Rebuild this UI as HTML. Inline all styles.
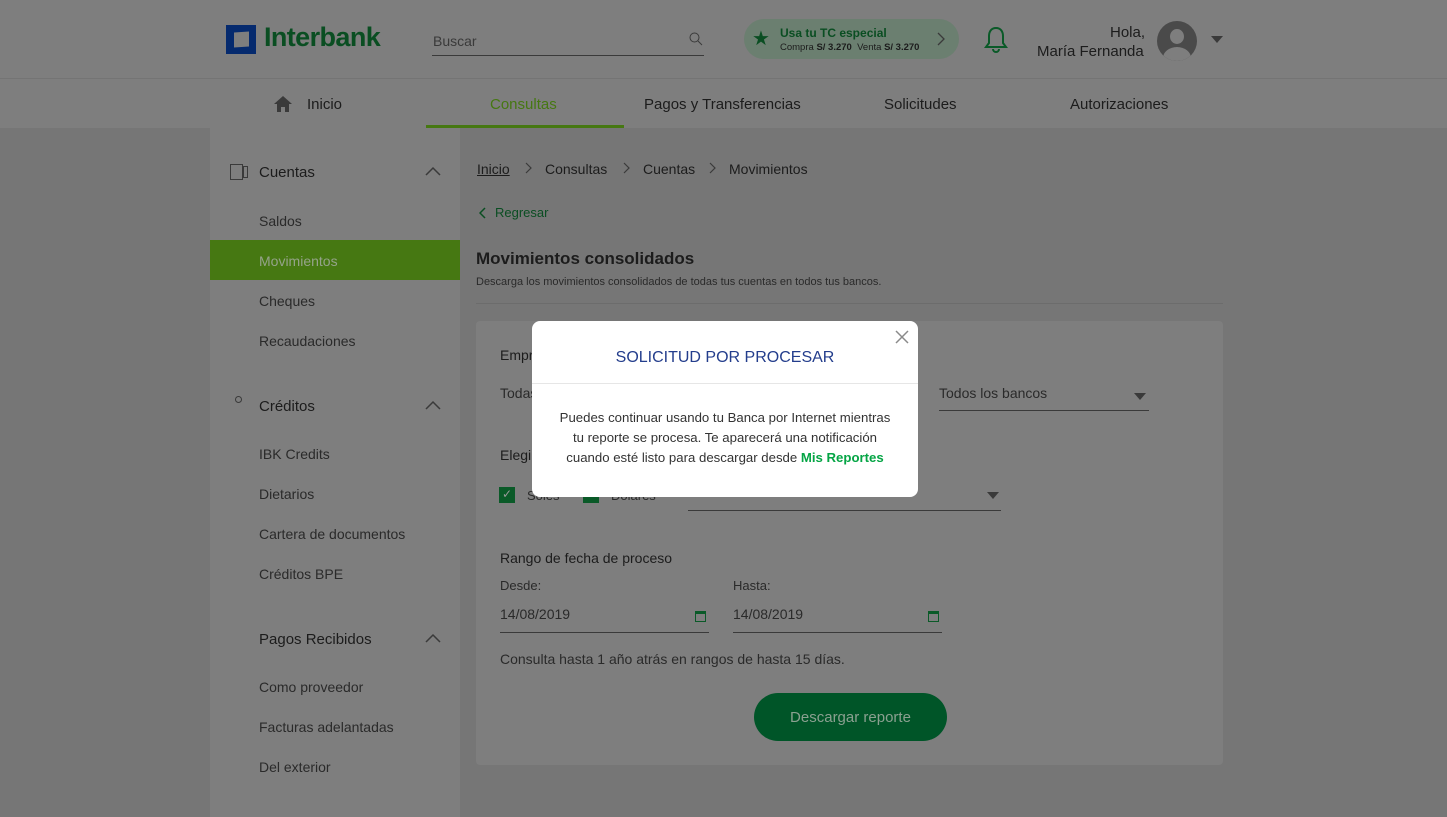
<!DOCTYPE html>
<html><head><meta charset="utf-8"><style>
*{margin:0;padding:0;box-sizing:border-box}
body{width:1447px;height:817px;overflow:hidden;background:#767676;font-family:"Liberation Sans",sans-serif;color:#1c1c1c;position:relative}
.a{position:absolute;white-space:nowrap}
</style></head><body>
<div class="a" style="left:0;top:0;width:1447px;height:128px;background:#7e7e7e"></div>
<div class="a" style="left:0;top:78px;width:1447px;height:1px;background:#747474"></div>
<!-- logo -->
<div class="a" style="left:226px;top:25px;width:30px;height:29px;background:#052a6e"></div>
<div class="a" style="left:234px;top:32px;width:15px;height:15px;background:#7e7e7e;transform:skewY(-4deg)"></div>
<div class="a" style="left:264px;top:22px;font-size:27px;font-weight:bold;color:#0a4e22;letter-spacing:-0.6px">Interbank</div>
<div class="a" style="left:433px;top:33px;font-size:14px;color:#3a3a3a">Buscar</div>
<div class="a" style="left:432px;top:55px;width:272px;height:1px;background:#3a3a3a"></div>
<svg class="a" style="left:689px;top:32px" width="14" height="14"><circle cx="5.5" cy="5.5" r="4.5" fill="none" stroke="#3a3a3a" stroke-width="1"/><line x1="9" y1="9" x2="13" y2="13" stroke="#3a3a3a"/></svg>
<div class="a" style="left:744px;top:19px;width:215px;height:40px;border-radius:20px;background:#6b7f70"></div>
<div class="a" style="left:752px;top:26px;font-size:20px;color:#0a4e22">★</div>
<div class="a" style="left:780px;top:26px;font-size:12px;font-weight:bold;color:#0a4e22">Usa tu TC especial</div>
<div class="a" style="left:780px;top:42px;font-size:9.5px;color:#1c1c1c">Compra <b>S/ 3.270</b> &nbsp;Venta <b>S/ 3.270</b></div>
<svg class="a" style="left:936px;top:32px" width="10" height="14"><path d="M2 1l6 6-6 6" fill="none" stroke="#3a3a3a" stroke-width="1.3"/></svg>
<svg class="a" style="left:983px;top:25px" width="26" height="30"><path d="M13 3c-5 0-7 4-7 8v7l-3 4h20l-3-4v-7c0-4-2-8-7-8z M10 24a3 3 0 0 0 6 0" fill="none" stroke="#0a5a28" stroke-width="2"/></svg>
<div class="a" style="left:1110px;top:24px;font-size:15px;color:#1c1c1c">Hola,</div>
<div class="a" style="left:1037px;top:43px;font-size:15px;color:#1c1c1c">María Fernanda</div>
<div class="a" style="left:1157px;top:21px;width:40px;height:40px;border-radius:50%;background:#4a4a4a;overflow:hidden"><div style="position:absolute;left:13px;top:8px;width:14px;height:15px;border-radius:50%;background:#7e7e7e"></div><div style="position:absolute;left:6px;top:26px;width:28px;height:22px;border-radius:50%;background:#7e7e7e"></div></div>
<div class="a" style="left:1211px;top:36px;border:6px solid transparent;border-top:7px solid #3a3a3a"></div>
<!-- nav -->
<svg class="a" style="left:273px;top:95px" width="20" height="18"><path d="M10 1L1 9h3v8h4v-5h4v5h4V9h3z" fill="#3a3a3a"/></svg>
<div class="a" style="left:307px;top:96px;font-size:15px">Inicio</div>
<div class="a" style="left:490px;top:96px;font-size:15px;color:#467812">Consultas</div>
<div class="a" style="left:426px;top:125px;width:198px;height:3px;background:#467812"></div>
<div class="a" style="left:644px;top:96px;font-size:15px">Pagos y Transferencias</div>
<div class="a" style="left:884px;top:96px;font-size:15px">Solicitudes</div>
<div class="a" style="left:1070px;top:96px;font-size:15px">Autorizaciones</div>
<!-- sidebar -->
<div class="a" style="left:210px;top:128px;width:250px;height:689px;background:#7e7e7e"></div>
<div class="a" style="left:230px;top:164px;width:13px;height:16px;border:1px solid #3a3a3a"></div>
<div class="a" style="left:243px;top:166px;width:5px;height:12px;border:1px solid #3a3a3a"></div>
<div class="a" style="left:259px;top:164px;font-size:15px">Cuentas</div>
<div class="a" style="left:259px;top:213px;font-size:14px;color:#2a2a2a">Saldos</div>
<div class="a" style="left:210px;top:240px;width:250px;height:40px;background:#467812"></div>
<div class="a" style="left:259px;top:253px;font-size:14px;color:#95a38a">Movimientos</div>
<div class="a" style="left:259px;top:293px;font-size:14px;color:#2a2a2a">Cheques</div>
<div class="a" style="left:259px;top:333px;font-size:14px;color:#2a2a2a">Recaudaciones</div>
<div class="a" style="left:235px;top:396px;width:7px;height:7px;border:1px solid #3a3a3a;border-radius:50%"></div>
<div class="a" style="left:259px;top:398px;font-size:15px">Créditos</div>
<div class="a" style="left:259px;top:446px;font-size:14px;color:#2a2a2a">IBK Credits</div>
<div class="a" style="left:259px;top:486px;font-size:14px;color:#2a2a2a">Dietarios</div>
<div class="a" style="left:259px;top:526px;font-size:14px;color:#2a2a2a">Cartera de documentos</div>
<div class="a" style="left:259px;top:566px;font-size:14px;color:#2a2a2a">Créditos BPE</div>
<div class="a" style="left:259px;top:631px;font-size:15px">Pagos Recibidos</div>
<div class="a" style="left:259px;top:679px;font-size:14px;color:#2a2a2a">Como proveedor</div>
<div class="a" style="left:259px;top:719px;font-size:14px;color:#2a2a2a">Facturas adelantadas</div>
<div class="a" style="left:259px;top:759px;font-size:14px;color:#2a2a2a">Del exterior</div>
<svg class="a" style="left:424px;top:166px" width="18" height="10"><path d="M2 9L9 2l7 7" fill="none" stroke="#3a3a3a" stroke-width="1.5"/></svg>
<svg class="a" style="left:424px;top:400px" width="18" height="10"><path d="M2 9L9 2l7 7" fill="none" stroke="#3a3a3a" stroke-width="1.5"/></svg>
<svg class="a" style="left:424px;top:633px" width="18" height="10"><path d="M2 9L9 2l7 7" fill="none" stroke="#3a3a3a" stroke-width="1.5"/></svg>
<!-- content -->
<div class="a" style="left:477px;top:161px;font-size:14px;text-decoration:underline">Inicio</div>
<svg class="a" style="left:525px;top:162px" width="8" height="12"><path d="M1 1l5 5-5 5" fill="none" stroke="#3a3a3a" stroke-width="1.2"/></svg>
<div class="a" style="left:545px;top:161px;font-size:14px">Consultas</div>
<svg class="a" style="left:623px;top:162px" width="8" height="12"><path d="M1 1l5 5-5 5" fill="none" stroke="#3a3a3a" stroke-width="1.2"/></svg>
<div class="a" style="left:643px;top:161px;font-size:14px">Cuentas</div>
<svg class="a" style="left:709px;top:162px" width="8" height="12"><path d="M1 1l5 5-5 5" fill="none" stroke="#3a3a3a" stroke-width="1.2"/></svg>
<div class="a" style="left:729px;top:161px;font-size:14px">Movimientos</div>
<svg class="a" style="left:479px;top:207px" width="8" height="12"><path d="M6 1L1 6l5 5" fill="none" stroke="#0a4e22" stroke-width="1.5"/></svg>
<div class="a" style="left:495px;top:205px;font-size:13px;color:#0a4e22">Regresar</div>
<div class="a" style="left:476px;top:249px;font-size:17px;font-weight:bold">Movimientos consolidados</div>
<div class="a" style="left:476px;top:276px;font-size:11px;color:#2a2a2a">Descarga los movimientos consolidados de todas tus cuentas en todos tus bancos.</div>
<div class="a" style="left:476px;top:303px;width:747px;height:1px;background:#6c6c6c"></div>
<div class="a" style="left:476px;top:321px;width:747px;height:444px;background:#7e7e7e;border-radius:4px"></div>
<div class="a" style="left:500px;top:347px;font-size:14px">Empresa</div>
<div class="a" style="left:500px;top:385px;font-size:14px;color:#2a2a2a">Todas</div>
<div class="a" style="left:939px;top:385px;font-size:14px;color:#2a2a2a">Todos los bancos</div>
<div class="a" style="left:939px;top:410px;width:210px;height:1px;background:#3a3a3a"></div>
<div class="a" style="left:1134px;top:393px;border:6px solid transparent;border-top:7px solid #3a3a3a"></div>
<div class="a" style="left:500px;top:447px;font-size:14px">Elegir</div>
<div class="a" style="left:499px;top:487px;width:16px;height:16px;background:#0a5a28;color:#9a9a9a;font-size:12px;text-align:center">✓</div>
<div class="a" style="left:527px;top:488px;font-size:13px;color:#2a2a2a">Soles</div>
<div class="a" style="left:583px;top:487px;width:16px;height:16px;background:#0a5a28"></div>
<div class="a" style="left:611px;top:488px;font-size:13px;color:#2a2a2a">Dólares</div>
<div class="a" style="left:688px;top:510px;width:313px;height:1px;background:#3a3a3a"></div>
<div class="a" style="left:987px;top:492px;border:6px solid transparent;border-top:7px solid #3a3a3a"></div>
<div class="a" style="left:500px;top:550px;font-size:14px">Rango de fecha de proceso</div>
<div class="a" style="left:500px;top:578px;font-size:13px;color:#2a2a2a">Desde:</div>
<div class="a" style="left:733px;top:578px;font-size:13px;color:#2a2a2a">Hasta:</div>
<div class="a" style="left:500px;top:606px;font-size:14px;color:#2a2a2a">14/08/2019</div>
<div class="a" style="left:733px;top:606px;font-size:14px;color:#2a2a2a">14/08/2019</div>
<div class="a" style="left:500px;top:632px;width:209px;height:1px;background:#3a3a3a"></div>
<div class="a" style="left:733px;top:632px;width:209px;height:1px;background:#3a3a3a"></div>
<div class="a" style="left:695px;top:611px;width:11px;height:11px;border:1px solid #0a5a28;border-top-width:3px"></div>
<div class="a" style="left:928px;top:611px;width:11px;height:11px;border:1px solid #0a5a28;border-top-width:3px"></div>
<div class="a" style="left:500px;top:651px;font-size:14px;color:#2a2a2a">Consulta hasta 1 año atrás en rangos de hasta 15 días.</div>
<div class="a" style="left:754px;top:693px;width:193px;height:48px;border-radius:24px;background:#005528;color:#8aa090;font-size:15px;text-align:center;line-height:50px">Descargar reporte</div>
<!-- modal -->
<div class="a" style="left:532px;top:321px;width:386px;height:176px;background:#fff;border-radius:8px"></div>
<div class="a" style="left:532px;top:349px;width:386px;text-align:center;font-size:16px;color:#233d8c">SOLICITUD POR PROCESAR</div>
<div class="a" style="left:532px;top:383px;width:386px;height:1px;background:#e6e6e6"></div>
<svg class="a" style="left:895px;top:330px" width="14" height="14"><path d="M1 1L13 13M13 1L1 13" stroke="#8a8a8a" stroke-width="1.5"/></svg>
<div class="a" style="left:532px;top:408px;width:386px;text-align:center;font-size:13.2px;line-height:20px;color:#333;white-space:normal">Puedes continuar usando tu Banca por Internet mientras<br>tu reporte se procesa. Te aparecerá una notificación<br>cuando esté listo para descargar desde <b style="color:#05a545">Mis Reportes</b></div>
</body></html>
